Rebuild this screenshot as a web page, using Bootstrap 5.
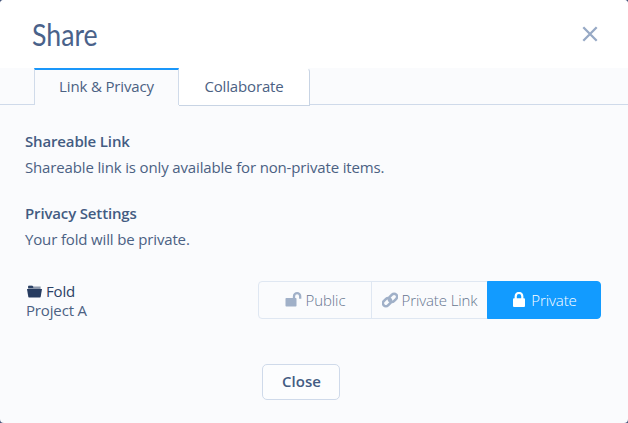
<!DOCTYPE html>
<html lang="en">
<head>
<meta charset="utf-8">
<title>Share</title>
<meta name="viewport" content="width=device-width, initial-scale=1">
<link href="https://cdn.jsdelivr.net/npm/bootstrap@5.3.0/dist/css/bootstrap.min.css" rel="stylesheet">
<style>
html,body{height:100%;overflow:hidden}
body{background:#46577c;font-family:"Open Sans",sans-serif;font-size:15px;line-height:20px;color:#4b6183;letter-spacing:-.15px}
.share-dialog{height:423px;border-radius:4px;background:#fafbfd;overflow:hidden}
.share-head{height:68px;background:#fff;padding:0 30px 0 32px}
.share-title{font-family:Lato,sans-serif;font-size:30px;line-height:36px;font-weight:400;color:#4a628a;letter-spacing:0;transform:scaleX(.89);transform-origin:left center}
.share-x{width:16px;height:16px;color:#97a9c5}
.share-tabs{height:37px;padding-left:34px;border-bottom:1px solid #cfdaea}
.share-tabs .nav-link{border:1px solid #d0dbea;border-radius:0;padding:0;height:38px;line-height:35px;text-align:center;color:#4b6183;margin:0}
.share-tabs .tab-on{width:145px;background:#fafbfd;border-top:2px solid #1a97fa;border-bottom:0;line-height:33px;height:37px}
.share-tabs .tab-off{width:131px;background:#fff;border-color:#fff #c8d4e4 #c8d4e4 #d0dbea;border-left:0;border-top-right-radius:4px}
.share-body{padding:26px 27px 0 25px}
.share-body h2{font-size:15px;line-height:20px;font-weight:600;margin:0;color:#435b82}
.share-body p{margin:6px 0 26px}
.item-row{margin-top:32px}
.item-name{line-height:19px;padding:1px 0 0 1px}
.item-name .fold-name{color:#2c4266}
.privacy-group{width:343px;height:38px}
.privacy-group .btn{font-size:15px;line-height:20px;font-weight:300;letter-spacing:-.1px;padding:0 0 1px;border-color:#dfe7f2;color:#66758f;background:#fafbfd;border-radius:4px;flex:none}
.privacy-group .btn svg{color:#a0b0c8}
.privacy-group .btn.picked{background:#129bff;border-color:#129bff;color:#fff}
.privacy-group .btn.picked svg{color:#fff;margin-right:6px}
.privacy-group .btn.w-private{padding-left:2px}
.w-public{width:114px}.w-link{width:117px}.w-private{width:114px}
.btn-close-dialog{width:78px;height:36px;margin-top:44px;margin-left:262px;border:1px solid #cfdaea;border-radius:5px;background:#fcfdfe;font-size:15px;line-height:18px;font-weight:600;color:#435b82;padding:0 0 2px 1px}
</style>
<script src="https://cdn.jsdelivr.net/npm/bootstrap@5.3.0/dist/js/bootstrap.bundle.min.js"></script>
</head>
<body>
<div class="share-dialog">
  <header class="share-head d-flex align-items-center justify-content-between">
    <h1 class="share-title mb-0">Share</h1>
    <svg class="share-x" viewBox="0 0 16 16" fill="none" stroke="currentColor" stroke-width="2.3" role="button" aria-label="Close"><path d="M1.3 1.3 14.7 14.7M14.7 1.3 1.3 14.7"/></svg>
  </header>
  <nav class="share-tabs nav flex-nowrap">
    <a class="nav-link tab-on" href="#">Link &amp; Privacy</a>
    <a class="nav-link tab-off" href="#">Collaborate</a>
  </nav>
  <main class="share-body">
    <h2>Shareable Link</h2>
    <p>Shareable link is only available for non-private items.</p>
    <h2>Privacy Settings</h2>
    <p class="mb-0">Your fold will be private.</p>
    <div class="item-row d-flex justify-content-between">
      <div class="item-name">
        <div class="fold-name d-flex align-items-center"><svg width="16" height="13" viewBox="-.7 0 16.4 13" class="me-1"><path d="M1.5 4V1.2q0-.7.7-.7h3.5l1 1h7.6V4z" fill="#8d99ad"/><path d="M1.5 3V1.2q0-.7.7-.7h3.5l1 1V3z" fill="#2c4266"/><path d="M.3 4h15.4l-1.4 8.2q-.1.5-.7.5H2.4q-.6 0-.7-.5z" fill="#263b60"/></svg><span>Fold</span></div>
        <div>Project A</div>
      </div>
      <div class="privacy-group btn-group">
        <button type="button" class="btn w-public d-flex align-items-center justify-content-center"><svg width="17" height="15" viewBox="0 0 17 15" class="me-1"><rect x=".5" y="6" width="11" height="8.5" rx=".8" fill="currentColor"/><path d="M9 7V4.3a3.1 3.1 0 0 1 6.2 0V6.7" fill="none" stroke="currentColor" stroke-width="2.3"/></svg>Public</button>
        <button type="button" class="btn w-link d-flex align-items-center justify-content-center"><svg width="16" height="16" viewBox="0 0 16 16" class="me-1"><g fill="none" stroke="currentColor" stroke-width="2.6" transform="rotate(-45 8 8)"><rect x="-.2" y="4.4" width="9.2" height="6" rx="3"/><rect x="7" y="5.6" width="9.2" height="6" rx="3"/></g></svg>Private Link</button>
        <button type="button" class="btn picked w-private d-flex align-items-center justify-content-center"><svg width="12" height="15" viewBox="0 0 12 15"><rect y="6.3" width="12" height="8.7" rx="1" fill="currentColor"/><path d="M2.7 7V4.2a3.3 3.3 0 0 1 6.6 0V7" fill="none" stroke="currentColor" stroke-width="2.2"/></svg>Private</button>
      </div>
    </div>
  </main>
  <button type="button" class="btn btn-close-dialog">Close</button>
</div>
</body>
</html>
